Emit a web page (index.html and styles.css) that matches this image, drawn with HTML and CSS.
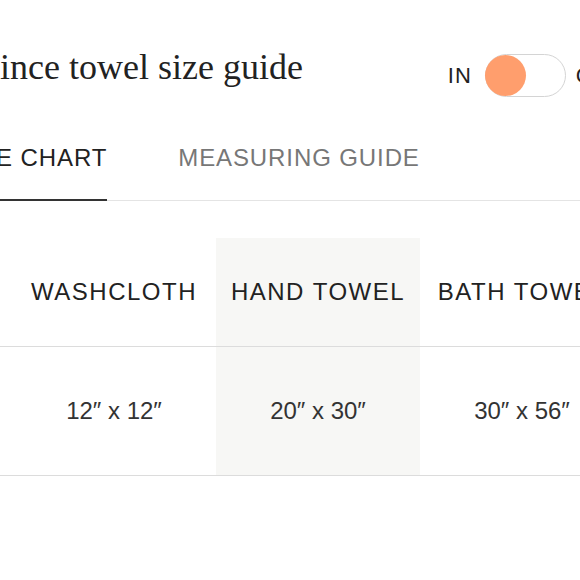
FILE: index.html
```html
<!DOCTYPE html>
<html lang="en">
<head>
<meta charset="utf-8">
<title>Quince towel size guide</title>
<link rel="stylesheet" href="styles.css">
</head>
<body>
<div class="page">
  <header class="guide-header">
    <h1 class="guide-title">Quince towel size guide</h1>
    <div class="units">
      <span class="unit">IN</span>
      <span class="toggle"><span class="knob"></span></span>
      <span class="unit">CM</span>
    </div>
  </header>

  <nav class="tabs">
    <span class="tab active">SIZE CHART</span>
    <span class="tab">MEASURING GUIDE</span>
  </nav>

  <table class="chart">
    <colgroup>
      <col class="col-label">
      <col class="col-size">
      <col class="col-size">
      <col class="col-size">
      <col class="col-size">
    </colgroup>
    <thead>
      <tr>
        <th class="label"></th>
        <th>WASHCLOTH</th>
        <th class="hl">HAND TOWEL</th>
        <th>BATH TOWEL</th>
        <th>BATH SHEET</th>
      </tr>
    </thead>
    <tbody>
      <tr>
        <td class="label"></td>
        <td>12″ x 12″</td>
        <td class="hl">20″ x 30″</td>
        <td>30″ x 56″</td>
        <td>35″ x 70″</td>
      </tr>
    </tbody>
  </table>
</div>
</body>
</html>
```

FILE: styles.css
```css
html, body {
  margin: 0;
  padding: 0;
  background: #ffffff;
}

body {
  overflow: hidden;
  width: 580px;
  height: 580px;
}

.page {
  width: 656px;
  margin-left: -44px;
  padding-top: 49px;
  font-family: "Liberation Sans", Arial, sans-serif;
  color: #222222;
}

.guide-header {
  display: flex;
  align-items: flex-start;
  justify-content: space-between;
}

.guide-title {
  margin: 0;
  font-family: "Liberation Serif", "Times New Roman", serif;
  font-weight: normal;
  font-size: 36px;
  line-height: 36px;
  color: #222222;
  white-space: nowrap;
}

.units {
  display: flex;
  align-items: center;
  height: 43px;
  margin-top: 5px;
}

.unit {
  font-size: 22px;
  letter-spacing: 1px;
  color: #222222;
}

.toggle {
  display: flex;
  align-items: center;
  box-sizing: border-box;
  width: 81px;
  height: 43px;
  margin: 0 10px 0 13px;
  border: 1.5px solid #d4d4d4;
  border-radius: 22px;
  padding: 0;
}

.knob {
  width: 41px;
  height: 41px;
  border-radius: 50%;
  background: #ff9e6d;
  margin-left: -0.5px;
}

.tabs {
  display: flex;
  gap: 71px;
  margin-top: 47px;
  border-bottom: 1px solid #e4e4e4;
}

.tab {
  font-size: 24px;
  line-height: 28px;
  letter-spacing: 0.9px;
  color: #777777;
  padding-bottom: 27px;
  white-space: nowrap;
}

.tab.active {
  color: #222222;
  border-bottom: 2px solid #333333;
  margin-bottom: -1px;
}

.chart {
  margin-top: 37px;
  border-collapse: collapse;
  table-layout: fixed;
  width: 872px;
}

.col-label {
  width: 56px;
}

.col-size {
  width: 204px;
}

.chart th,
.chart td {
  padding: 0;
  text-align: center;
  vertical-align: middle;
  white-space: nowrap;
  border-bottom: 1px solid #dcdcdc;
}

.chart th {
  height: 108px;
  font-size: 24px;
  font-weight: normal;
  letter-spacing: 1.5px;
  color: #222222;
}

.chart td {
  height: 128px;
  font-family: "Liberation Sans", "DejaVu Sans", sans-serif;
  font-size: 24px;
  color: #333333;
}

.chart .hl {
  background: #f7f7f5;
}
```
